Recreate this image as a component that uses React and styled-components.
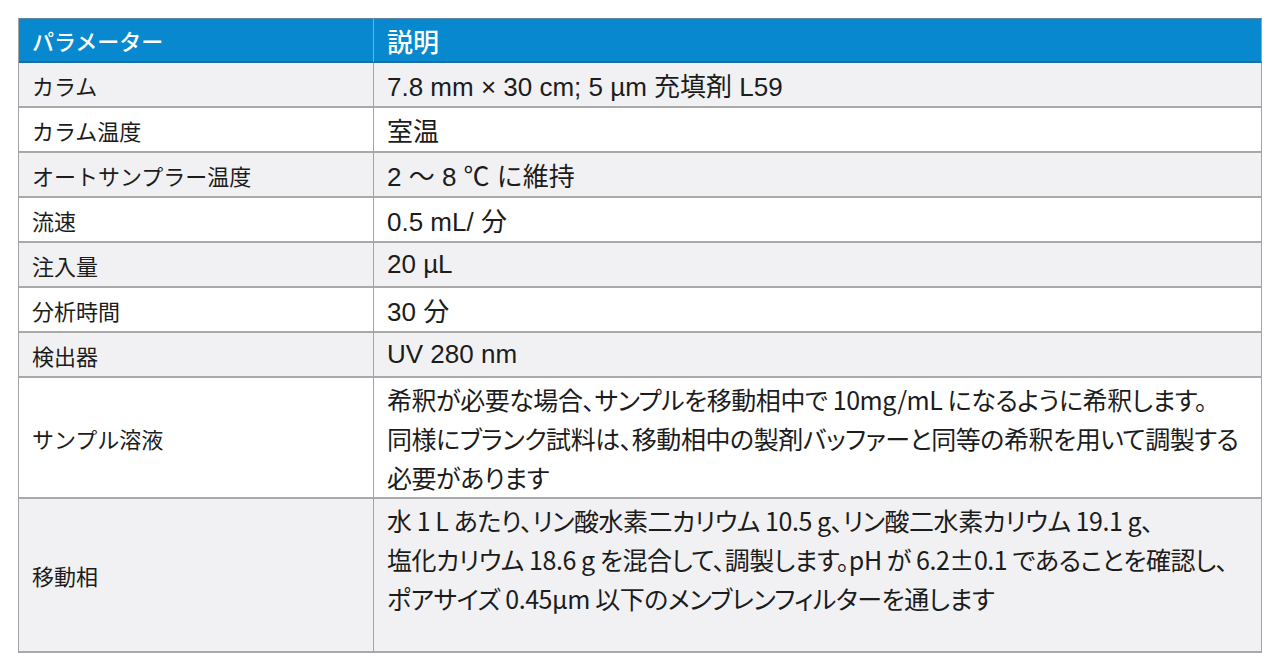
import React from "react";
import styled, { createGlobalStyle } from "styled-components";

const GlobalStyle = createGlobalStyle`
  html, body {
    margin: 0;
    padding: 0;
    background: #ffffff;
  }
  body {
    font-family: "Liberation Sans", "Noto Sans CJK JP", sans-serif;
    color: #1a1a1a;
  }
`;

const Page = styled.div`
  padding: 18px 19px 0 18px;
  width: 1280px;
  box-sizing: border-box;
`;

const Table = styled.div`
  display: grid;
  grid-template-columns: 355px 1fr;
  width: 1243px;
  border-left: 1px solid #a3a3a3;
  border-top: 1px solid #5f87a3;
`;

const Cell = styled.div`
  box-sizing: border-box;
  display: flex;
  align-items: ${(p) => (p.$top ? "flex-start" : "center")};
  min-height: ${(p) => p.$h}px;
  padding: ${(p) => (p.$top ? "2px 12px 0 13px" : "0 12px 0 13px")};
  background: ${(p) => (p.$head ? "#0788cf" : p.$shade ? "#f1f1f3" : "#ffffff")};
  color: ${(p) => (p.$head ? "#ffffff" : "#1c1c1c")};
  font-size: ${(p) => (p.$wide ? 26 : 22)}px;
  font-weight: ${(p) => (p.$head ? 500 : 400)};
  white-space: nowrap;
  border-right: 1px solid #a3a3a3;
  border-bottom: 2px solid ${(p) => (p.$head ? "#1b6f9f" : "#a9a9a9")};
`;

const LongText = styled.div`
  font-family: "Noto Sans CJK JP", sans-serif;
  font-feature-settings: "palt";
  font-size: 25px;
  line-height: 39px;
  letter-spacing: -0.45px;
  color: #1c1c1c;
`;

const rows = [
  { label: "カラム", value: "7.8 mm × 30 cm; 5 µm 充填剤 L59" },
  { label: "カラム温度", value: "室温" },
  { label: "オートサンプラー温度", value: "2 ～ 8 ℃ に維持" },
  { label: "流速", value: "0.5 mL/ 分" },
  { label: "注入量", value: "20 µL" },
  { label: "分析時間", value: "30 分" },
  { label: "検出器", value: "UV 280 nm" },
  {
    label: "サンプル溶液",
    h: 118,
    lines: [
      "希釈が必要な場合、サンプルを移動相中で 10mg/mL になるように希釈します。",
      "同様にブランク試料は、移動相中の製剤バッファーと同等の希釈を用いて調製する",
      "必要があります",
    ],
  },
  {
    label: "移動相",
    h: 154,
    lines: [
      "水 1 L あたり、リン酸水素二カリウム 10.5 g、リン酸二水素カリウム 19.1 g、",
      "塩化カリウム 18.6 g を混合して、調製します。pH が 6.2±0.1 であることを確認し、",
      "ポアサイズ 0.45µm 以下のメンブレンフィルターを通します",
    ],
  },
];

export default function App() {
  return (
    <Page>
      <GlobalStyle />
      <Table>
        <Cell $head $h={44}>パラメーター</Cell>
        <Cell $head $wide $h={44}>説明</Cell>
        {rows.map((row, i) => {
          const shade = i % 2 === 0;
          const h = row.h || 45;
          return (
            <React.Fragment key={row.label}>
              <Cell $shade={shade} $h={h}>{row.label}</Cell>
              {row.lines ? (
                <Cell $shade={shade} $h={h} $top>
                  <LongText>
                    {row.lines.map((line) => (
                      <div key={line}>{line}</div>
                    ))}
                  </LongText>
                </Cell>
              ) : (
                <Cell $shade={shade} $wide $h={h}>{row.value}</Cell>
              )}
            </React.Fragment>
          );
        })}
      </Table>
    </Page>
  );
}
